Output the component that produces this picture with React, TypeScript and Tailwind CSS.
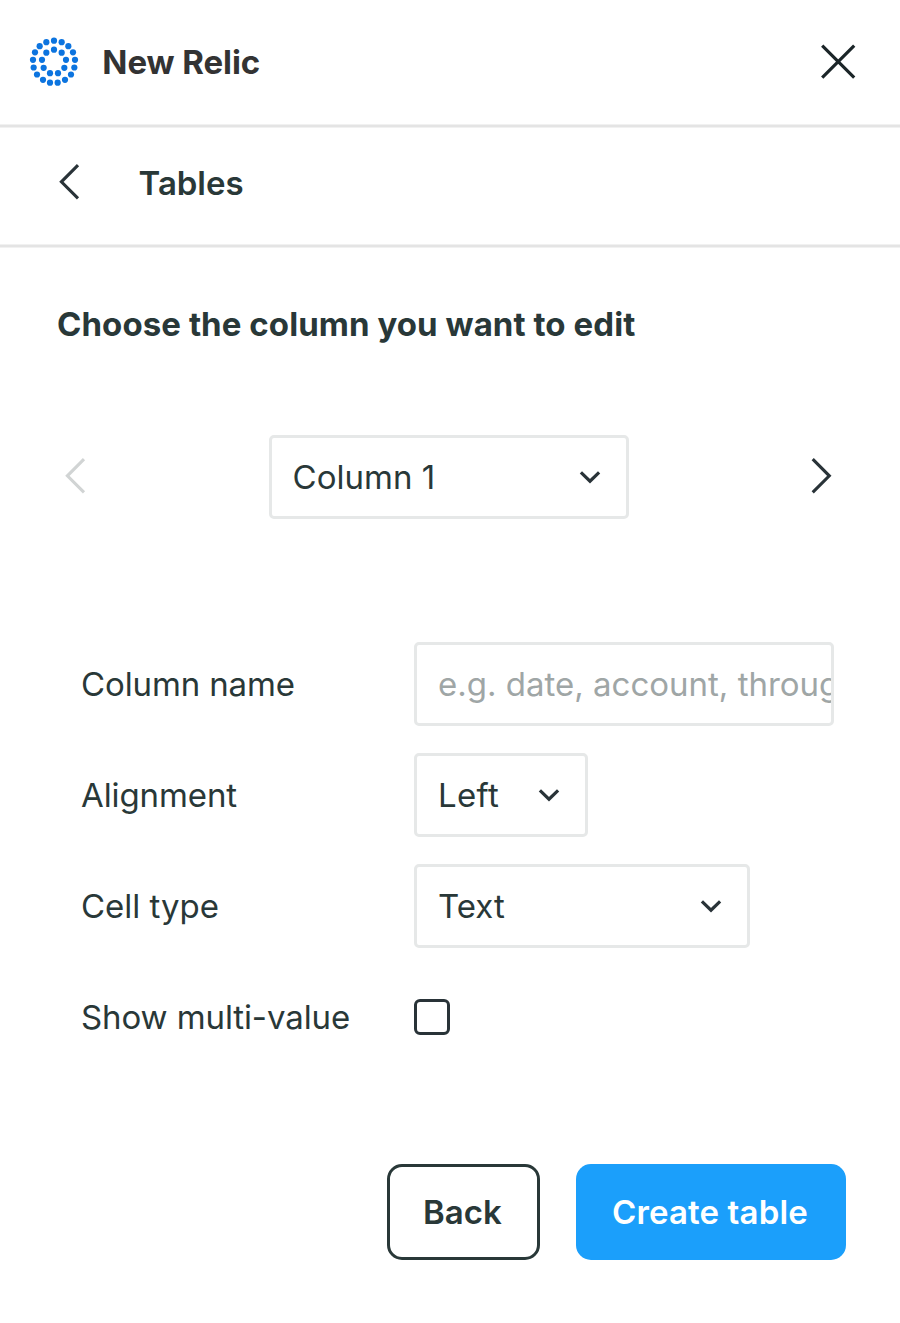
import type { ReactNode } from "react";

const OUTER_DOTS = [
  [102, 31.5], [125, 36], [145, 48], [159, 66.5], [165, 89], [163, 112], [153, 133], [135, 149], [113, 157.5],
  [90, 157.5], [69, 149], [51, 133], [41, 112], [39, 89], [45, 66.5], [59, 48], [79, 36],
];
const INNER_DOTS = [
  [102, 58.5], [125, 67.5], [138, 89], [133, 113], [114, 129], [90, 129], [71, 113], [66, 89], [79, 67.5],
];

function Logo() {
  return (
    <svg className="h-[50px] w-[50px] shrink-0" viewBox="27 20.5 150 150" fill="#0c74df" aria-hidden="true">
      {[...OUTER_DOTS, ...INNER_DOTS].map(([cx, cy]) => (
        <circle key={`${cx}-${cy}`} cx={cx} cy={cy} r="9.3" />
      ))}
    </svg>
  );
}

function Chevron({ flip = false, color = "#293338" }: { flip?: boolean; color?: string }) {
  return (
    <svg className="h-9 w-5 shrink-0 overflow-visible" viewBox="0 0 20 36" fill="none" stroke={color} strokeWidth="3.1" aria-hidden="true">
      <path d={flip ? "M1.7 1.2 18.3 17.8 1.7 34.4" : "M19 1.2 2.4 17.8 19 34.4"} />
    </svg>
  );
}

function Select({ value, className }: { value: string; className: string }) {
  return (
    <button
      type="button"
      className={`flex h-[84px] items-center justify-between rounded-[5px] border-[3px] border-[#e6e8e8] bg-white pr-[26px] pl-[21px] ${className}`}
    >
      <span>{value}</span>
      <svg className="h-3 w-5 shrink-0 overflow-visible" viewBox="0 0 20 12" fill="none" stroke="#293338" strokeWidth="3.2" aria-hidden="true">
        <path d="M0.9 1.3 10 10.2 19.1 1.3" />
      </svg>
    </button>
  );
}

function Row({ label, className = "", children }: { label: string; className?: string; children: ReactNode }) {
  return (
    <div className="flex h-[84px] items-center">
      <span className={`w-[333px] shrink-0 whitespace-nowrap ${className}`}>{label}</span>
      {children}
    </div>
  );
}

function Divider() {
  return <div className="h-1 border-y border-[#f1f1f1] bg-[#e4e4e4]" />;
}

export default function App() {
  return (
    <div className="h-[1323px] w-[900px] overflow-hidden bg-white font-['Inter',sans-serif] text-[33px] leading-[40px] text-[#293838]">
      <header className="flex h-[124px] items-center pr-[45px] pl-[29px]">
        <Logo />
        <h1 className="ml-[23.3px] font-bold tracking-[-0.06px] text-[#333333]">New Relic</h1>
        <button type="button" aria-label="Close" className="ml-auto">
          <svg className="block h-[34px] w-[34px] overflow-visible" viewBox="0 0 34 34" fill="none" stroke="#1b2528" strokeWidth="3.2" aria-hidden="true">
            <path d="M1.2 0.6 33.2 32.6M33.2 0.6 1.2 32.6" />
          </svg>
        </button>
      </header>
      <Divider />
      <nav className="flex h-[116px] items-start pl-[59px]">
        <button type="button" aria-label="Back to tables" className="mt-9">
          <Chevron />
        </button>
        <h2 className="mt-[35px] ml-[59.6px] font-semibold tracking-[-0.05px]">Tables</h2>
      </nav>
      <Divider />
      <main>
        <h3 className="pt-14 pl-[57px] font-bold tracking-[0.07px]">Choose the column you want to edit</h3>
        <div className="mt-[91px] flex h-[84px] items-start pr-[69px] pl-[65px]">
          <button type="button" aria-label="Previous column" className="mt-[23px]" disabled>
            <Chevron color="#d1d4d4" />
          </button>
          <Select value="Column 1" className="ml-[183.6px] w-[360px]" />
          <button type="button" aria-label="Next column" className="mt-[23px] ml-auto">
            <Chevron flip />
          </button>
        </div>
        <div className="mt-[123px] flex flex-col gap-[27px] pl-[81px]">
          <Row label="Column name" className="tracking-[-0.12px]">
            <div className="flex h-[84px] w-[420px] items-center overflow-hidden rounded-[5px] border-[3px] border-[#e6e8e8] pl-[21px] whitespace-nowrap text-[#9fa6a6]">
              e.g. date, account, throughput
            </div>
          </Row>
          <Row label="Alignment" className="tracking-[-0.1px]">
            <Select value="Left" className="w-[174px] tracking-[0.3px]" />
          </Row>
          <Row label="Cell type">
            <Select value="Text" className="w-[336px]" />
          </Row>
          <Row label="Show multi-value" className="tracking-[-0.1px]">
            <span role="checkbox" aria-checked="false" className="h-9 w-9 rounded-[6px] border-[3px] border-[#293338]" />
          </Row>
        </div>
        <div className="mt-[105px] flex justify-end gap-9 pr-[54px] font-semibold">
          <button type="button" className="h-24 w-[153px] rounded-[15px] border-[3px] border-[#293838] pl-[33px] text-left">
            Back
          </button>
          <button type="button" className="h-24 w-[270px] rounded-[15px] bg-[#1b9ffb] pl-9 text-left tracking-[0.14px] text-white">
            Create table
          </button>
        </div>
      </main>
    </div>
  );
}
